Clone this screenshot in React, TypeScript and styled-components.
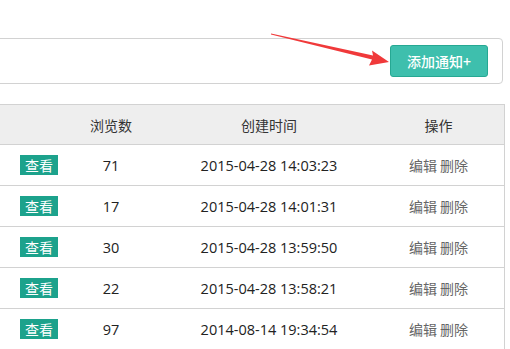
import styled, { createGlobalStyle } from 'styled-components'

interface IRow {
  views: number
  created: string
}

const rows: IRow[] = [
  { views: 71, created: '2015-04-28 14:03:23' },
  { views: 17, created: '2015-04-28 14:01:31' },
  { views: 30, created: '2015-04-28 13:59:50' },
  { views: 22, created: '2015-04-28 13:58:21' },
  { views: 97, created: '2014-08-14 19:34:54' },
]

const GlobalStyle = createGlobalStyle`
  html, body {
    margin: 0;
    padding: 0;
    background: #fff;
    overflow: hidden;
  }
  body {
    font-family: "Open Sans", "Noto Sans CJK SC", sans-serif;
    font-size: 14px;
    color: #333;
  }
`

const StyledPage = styled.div`
  position: relative;
  width: 510px;
  height: 349px;
  padding-top: 38px;
  box-sizing: border-box;
`

const StyledToolbar = styled.div`
  margin-left: -6px;
  width: 509px;
  height: 46px;
  box-sizing: border-box;
  border: 1px solid #d2d2d2;
  border-radius: 4px;
  display: flex;
  justify-content: flex-end;
  align-items: center;
  padding-right: 14px;
`

const StyledAddButton = styled.button`
  width: 98px;
  height: 32px;
  border: 1px solid #26a893;
  border-radius: 3px;
  background-color: #3ebfad;
  color: #fff;
  font: inherit;
  font-family: "Noto Sans CJK SC", sans-serif;
  font-size: 14px;
  font-weight: 500;
  cursor: pointer;
  padding: 0;
`

const StyledTable = styled.div`
  margin-top: 20px;
  margin-left: -1px;
  width: 504px;
  border: 1px solid #d2d2d2;
  border-bottom: none;
`

const StyledRow = styled.div<{ $head?: boolean }>`
  display: grid;
  grid-template-columns: 76px 70px 246px 1fr;
  align-items: center;
  height: ${(p) => (p.$head ? '39px' : '40px')};
  border-bottom: 1px solid #d2d2d2;
  background-color: ${(p) => (p.$head ? '#eeeeee' : '#fff')};
`

const StyledCell = styled.div`
  text-align: center;
  color: #222;
  font-size: 14.5px;
  white-space: nowrap;
`

const StyledTextCell = styled.div<{ $muted?: boolean }>`
  text-align: center;
  white-space: nowrap;
  font-family: "Noto Sans CJK SC", sans-serif;
  color: ${(p) => (p.$muted ? '#666' : '#333')};
  &:last-child {
    padding-right: 19px;
  }
`

const StyledTitleCell = styled.div`
  padding-left: 20px;
  display: flex;
`

const StyledBadge = styled.span`
  display: inline-block;
  width: 38px;
  height: 20px;
  line-height: 20px;
  text-align: center;
  background-color: #1ca28c;
  color: #fff;
  font-family: "Noto Sans CJK SC", sans-serif;
  font-size: 14px;
`

const StyledArrow = styled.svg`
  position: absolute;
  left: 0;
  top: 0;
  pointer-events: none;
`

const App = () => {
  return (
    <StyledPage>
      <GlobalStyle />
      <StyledToolbar>
        <StyledAddButton>添加通知+</StyledAddButton>
      </StyledToolbar>
      <StyledTable>
        <StyledRow $head>
          <StyledTextCell />
          <StyledTextCell>浏览数</StyledTextCell>
          <StyledTextCell>创建时间</StyledTextCell>
          <StyledTextCell>操作</StyledTextCell>
        </StyledRow>
        {rows.map((row) => (
          <StyledRow key={row.created}>
            <StyledTitleCell>
              <StyledBadge>查看</StyledBadge>
            </StyledTitleCell>
            <StyledCell>{row.views}</StyledCell>
            <StyledCell>{row.created}</StyledCell>
            <StyledTextCell $muted>编辑 删除</StyledTextCell>
          </StyledRow>
        ))}
      </StyledTable>
      <StyledArrow width="510" height="349" viewBox="0 0 510 349">
        <polygon
          points="271,33.6 373,55.6 372,50.5 389,62 369,65.5 372,59.6 271,34.6"
          fill="#f0393a"
        />
      </StyledArrow>
    </StyledPage>
  )
}

export default App
